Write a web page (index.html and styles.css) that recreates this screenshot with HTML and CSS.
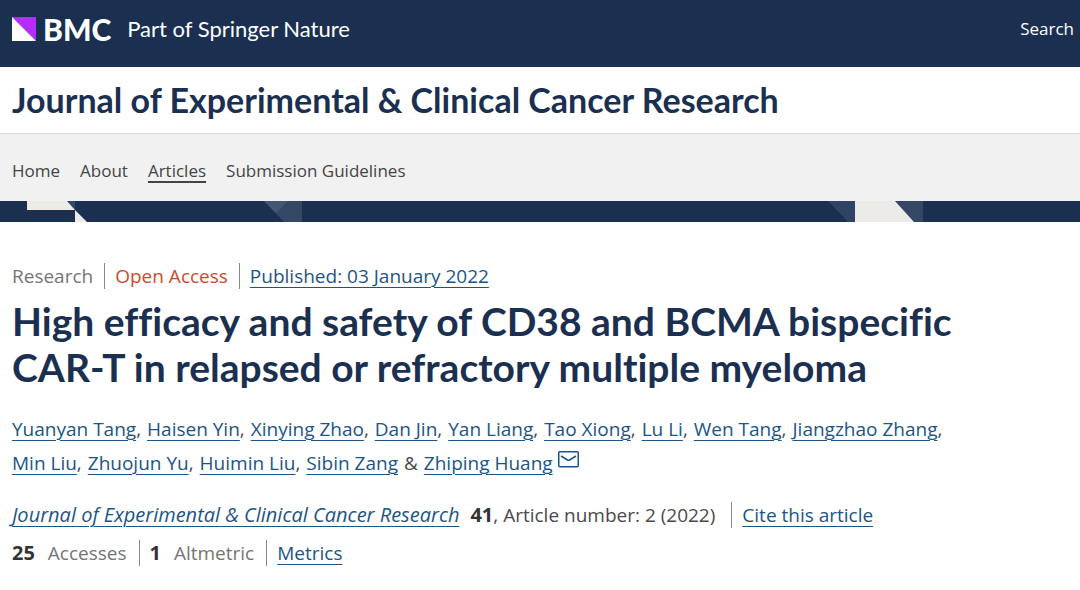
FILE: index.html
```html
<!DOCTYPE html>
<html lang="en">
<head>
  <meta charset="UTF-8" />
  <meta name="viewport" content="width=device-width, initial-scale=1.0" />
  <title>High efficacy and safety of CD38 and BCMA bispecific CAR-T in relapsed or refractory multiple myeloma</title>
  <link rel="stylesheet" href="styles.css">
</head>
<body>

  <header class="top-bar">
    <a href="#" class="brand">
      <svg class="brand-mark" viewBox="0 0 24 24" aria-hidden="true">
        <path d="M0 0H24V24Z" fill="#b62dff" />
        <path d="M0 0V24H24Z" fill="#fff" />
      </svg>
      <span class="brand-name">BMC</span>
      <span class="brand-tagline">Part of Springer Nature</span>
    </a>
    <a href="#" class="search-link">Search</a>
  </header>

  <div class="journal">
    <p class="journal-title">Journal of Experimental &amp; Clinical Cancer Research</p>
  </div>

  <nav class="journal-nav">
    <a href="#">Home</a>
    <a href="#">About</a>
    <a href="#" class="active">Articles</a>
    <a href="#">Submission Guidelines</a>
  </nav>

  <div class="banner">
    <svg class="banner-art" width="1080" height="21" viewBox="0 0 1080 21" aria-hidden="true">
      <path d="M67 0H75V9Z" fill="#344866" />
      <path d="M27 0H67L75 9H27Z" fill="#ecebe7" />
      <path d="M75 9L87 21H75Z" fill="#ecebe7" />
      <path d="M264 0H302V21H284Z" fill="#344866" />
      <path d="M264 0H288L276 12Z" fill="#435673" />
      <path d="M828 0H855V21H848Z" fill="#2f4464" />
      <path d="M895 0H923V21H914Z" fill="#344866" />
      <path d="M855 0H895L914 21H855Z" fill="#ecebe7" />
    </svg>
  </div>

  <main class="article">
    <ul class="divided meta">
      <li class="muted">Research</li>
      <li class="open-access">Open Access</li>
      <li><a href="#">Published: 03 January 2022</a></li>
    </ul>

    <h1>High efficacy and safety of CD38 and BCMA bispecific CAR-T in relapsed or refractory multiple myeloma</h1>

    <ul class="authors">
      <li><a href="#">Yuanyan Tang</a>,</li>
      <li><a href="#">Haisen Yin</a>,</li>
      <li><a href="#">Xinying Zhao</a>,</li>
      <li><a href="#">Dan Jin</a>,</li>
      <li><a href="#">Yan Liang</a>,</li>
      <li><a href="#">Tao Xiong</a>,</li>
      <li><a href="#">Lu Li</a>,</li>
      <li><a href="#">Wen Tang</a>,</li>
      <li><a href="#">Jiangzhao Zhang</a>,</li>
      <li><a href="#">Min Liu</a>,</li>
      <li><a href="#">Zhuojun Yu</a>,</li>
      <li><a href="#">Huimin Liu</a>,</li>
      <li><a href="#">Sibin Zang</a></li>
      <li>&amp;</li>
      <li>
        <a href="#">Zhiping Huang</a>
        <a href="#" class="mail" aria-label="Email Zhiping Huang"><svg width="21" height="17" viewBox="0 0 21 17" aria-hidden="true">
          <rect x="0.75" y="0.75" width="19.5" height="15" rx="1" />
          <path d="M3 5L9.5 9Q10.5 9.6 11.5 9L18 5" />
        </svg></a>
      </li>
    </ul>

    <ul class="divided citation">
      <li><a href="#"><i>Journal of Experimental &amp; Clinical Cancer Research</i></a> <b>41</b>, Article number: 2 (2022)</li>
      <li><a href="#">Cite this article</a></li>
    </ul>

    <ul class="divided metrics">
      <li><b>25</b> <span class="muted">Accesses</span></li>
      <li><b>1</b> <span class="muted">Altmetric</span></li>
      <li><a href="#">Metrics</a></li>
    </ul>
  </main>

</body>
</html>
```
FILE: styles.css
```css
* {
  box-sizing: border-box;
}

body {
  margin: 0;
  background-color: #fff;
  color: #4a4a4a;
  font-family: "Open Sans", "Noto Sans", sans-serif;
  font-size: 19px;
  line-height: 34px;
}

a {
  color: #1b5587;
  text-decoration-thickness: 1px;
  text-underline-offset: 4px;
}

.top-bar {
  display: flex;
  align-items: center;
  justify-content: space-between;
  padding: 8px 6px 18px 12px;
  min-height: 67px;
  background-color: #1b3051;
}

.top-bar a {
  color: #fff;
  text-decoration: none;
}

.brand {
  display: flex;
  align-items: center;
  font-family: Lato, sans-serif;
}

.brand-mark {
  width: 24px;
  height: 24px;
}

.brand-name {
  margin-left: 7px;
  font-size: 30px;
  font-weight: 900;
}

.brand-tagline {
  margin-left: 16px;
  font-size: 22px;
}

.search-link {
  font-size: 17px;
}

.journal {
  padding: 12px;
  border-bottom: 1px solid #dadada;
}

.journal-title {
  margin: 0;
  color: #1b3051;
  font-family: Lato, sans-serif;
  font-size: 34px;
  font-weight: bold;
  line-height: 42px;
}

.journal-nav {
  display: flex;
  flex-wrap: wrap;
  gap: 20px;
  padding: 20px 12px 13px;
  background-color: #f1f1f1;
  font-size: 17px;
}

.journal-nav a {
  color: #444;
  text-decoration: none;
}

.journal-nav .active {
  text-decoration: underline;
  text-decoration-thickness: 2px;
}

.banner {
  height: 21px;
  overflow: hidden;
  background-color: #1b3051;
}

.banner-art {
  display: block;
}

.article {
  max-width: 1010px;
  padding: 41px 12px 20px;
}

.divided,
.authors {
  display: flex;
  flex-wrap: wrap;
  margin: 0;
  padding: 0;
  list-style: none;
}

.divided li {
  line-height: 26px;
}

.divided li + li {
  margin-left: 11px;
  padding-left: 10px;
  border-left: 1px solid #888;
}

.divided i,
.divided b {
  font-size: 20px;
}

.divided b {
  color: #333;
}

.muted {
  color: #757575;
}

.open-access {
  color: #cc4b2c;
}

h1 {
  margin: 9px 0 0;
  color: #1b3051;
  font-family: Lato, sans-serif;
  font-size: 39px;
  font-variant-ligatures: none;
  line-height: 46px;
}

.authors {
  column-gap: 6px;
  margin: 22px 0;
}

.mail {
  text-decoration: none;
}

.mail svg {
  vertical-align: 2px;
  fill: none;
  stroke: #1b5587;
  stroke-width: 1.5;
}

.citation b {
  margin-left: 6px;
}

.citation li + li {
  margin-left: 16px;
}

.metrics {
  margin-top: 12px;
}

.metrics li + li {
  margin-left: 12px;
}

.metrics .muted {
  margin-left: 8px;
}
```
